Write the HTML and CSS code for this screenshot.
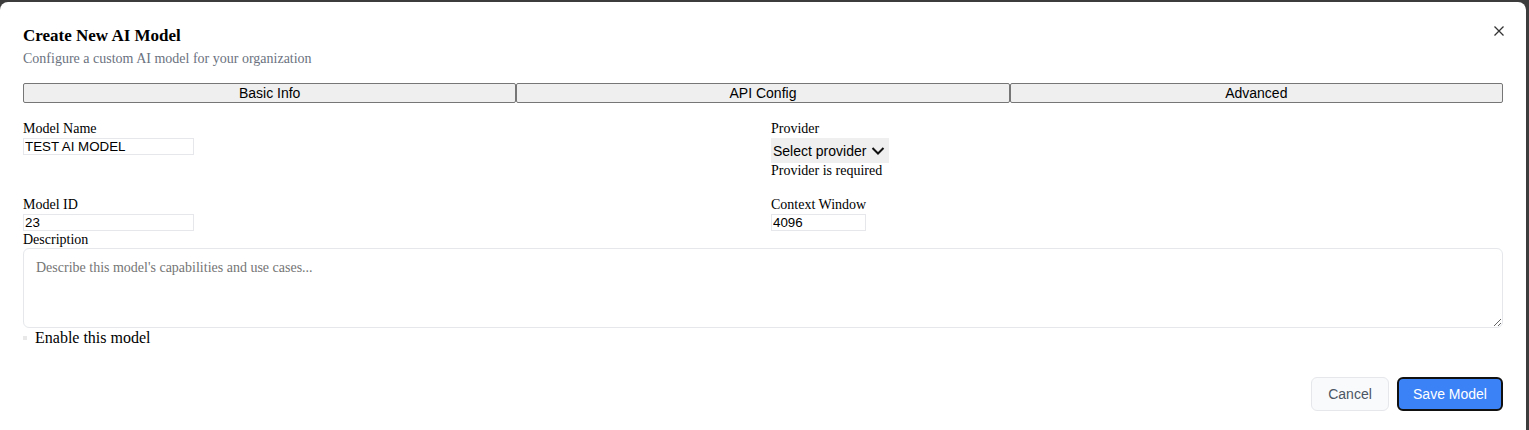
FILE: index.html
```html
<!DOCTYPE html>
<html>
<head>
<meta charset="utf-8">
<link rel="stylesheet" href="styles.css">
</head>
<body>
<div class="dialog">
  <button class="close" aria-label="Close">
    <svg width="12" height="12" viewBox="0 0 12 12"><path d="M1.5 1.5L10.5 10.5M10.5 1.5L1.5 10.5" stroke="#333" stroke-width="1.3" fill="none"/></svg>
  </button>
  <h2 class="title">Create New AI Model</h2>
  <p class="subtitle">Configure a custom AI model for your organization</p>
  <div class="tabs">
    <button class="tab">Basic Info</button>
    <button class="tab">API Config</button>
    <button class="tab">Advanced</button>
  </div>
  <div class="grid">
    <div class="field">
      <label class="label">Model Name</label>
      <input class="input name" value="TEST AI MODEL">
    </div>
    <div class="field">
      <label class="label">Provider</label>
      <div class="select">Select provider
        <svg width="14" height="10" viewBox="0 0 14 10"><path d="M1.5 2L7 7.5L12.5 2" stroke="#111" stroke-width="2" fill="none"/></svg>
      </div>
      <div class="error">Provider is required</div>
    </div>
    <div class="field">
      <label class="label">Model ID</label>
      <input class="input name" value="23">
    </div>
    <div class="field">
      <label class="label">Context Window</label>
      <input class="input ctx" value="4096">
    </div>
  </div>
  <label class="label desc-label">Description</label>
  <textarea class="textarea" placeholder="Describe this model's capabilities and use cases..."></textarea>
  <div class="enable"><span class="check"></span><span>Enable this model</span></div>
  <div class="footer">
    <button class="btn cancel">Cancel</button>
    <button class="btn save">Save Model</button>
  </div>
</div>
</body>
</html>
```
FILE: styles.css
```css
html, body {
  margin: 0;
  padding: 0;
  height: 100%;
}
body {
  background: #3c3c3c;
  font-family: "Liberation Serif", "Times New Roman", serif;
  overflow: hidden;
}
.dialog {
  position: relative;
  margin: 2px 3px 0 0;
  height: 440px;
  background: #fff;
  border-radius: 8px;
  padding: 22px 23px 0 23px;
  box-sizing: border-box;
}
.close {
  position: absolute;
  top: 23px;
  right: 21px;
  border: none;
  background: none;
  padding: 0;
  width: 12px;
  height: 12px;
  display: flex;
}
.title {
  margin: 0;
  font-size: 17px;
  line-height: 24px;
  font-weight: bold;
  color: #000;
}
.subtitle {
  margin: 3px 0 0;
  font-size: 14px;
  line-height: 16px;
  color: #6b7280;
}
.tabs {
  display: flex;
  margin-top: 16px;
}
.tab {
  flex: 1;
  height: 20px;
  margin: 0;
  padding: 0;
  font-family: "Liberation Sans", Arial, sans-serif;
  font-size: 14px;
  color: #000;
  background: #efefef;
  border: 1px solid #767676;
  border-radius: 2px;
}
.grid {
  display: grid;
  grid-template-columns: 1fr 1fr;
  column-gap: 16px;
  row-gap: 18px;
  margin-top: 18px;
}
.field {
  display: flex;
  flex-direction: column;
  align-items: flex-start;
}
.label {
  display: block;
  font-size: 14px;
  line-height: 16px;
  color: #000;
}
.input {
  box-sizing: border-box;
  height: 17px;
  margin-top: 1px;
  padding: 0 1px;
  border: 1px solid #e5e7eb;
  font-family: "Liberation Sans", Arial, sans-serif;
  font-size: 13.33px;
  color: #000;
  outline: none;
}
.name { width: 171px; }
.ctx { width: 95px; }
.select {
  display: flex;
  align-items: center;
  gap: 5px;
  height: 25px;
  margin-top: 1px;
  padding: 0 4px 0 2px;
  background: #efefef;
  font-family: "Liberation Sans", Arial, sans-serif;
  font-size: 14px;
  color: #000;
}
.error {
  font-size: 14px;
  line-height: 16px;
  color: #000;
}
.desc-label {
  margin-top: 1px;
}
.textarea {
  display: block;
  box-sizing: border-box;
  width: 100%;
  height: 80px;
  margin: 0;
  padding: 11px 12px;
  border: 1px solid #e5e7eb;
  border-radius: 6px;
  font-family: "Liberation Serif", "Times New Roman", serif;
  font-size: 14px;
  outline: none;
}
.textarea::placeholder {
  color: #757575;
}
.enable {
  display: flex;
  align-items: center;
  gap: 8px;
  margin-top: 2px;
  font-size: 16px;
  line-height: 16px;
}
.check {
  width: 4px;
  height: 4px;
  background: #e8e8e8;
}
.footer {
  display: flex;
  justify-content: flex-end;
  gap: 8px;
  margin-top: 31px;
}
.btn {
  height: 34px;
  border-radius: 6px;
  font-family: "Liberation Sans", Arial, sans-serif;
  font-size: 14px;
  padding: 0;
  white-space: nowrap;
}
.cancel {
  width: 78px;
  background: #f9fafb;
  border: 1px solid #e5e7eb;
  color: #4b5563;
}
.save {
  width: 106px;
  background: #3b82f6;
  border: 2px solid #111;
  color: #fff;
}
```
